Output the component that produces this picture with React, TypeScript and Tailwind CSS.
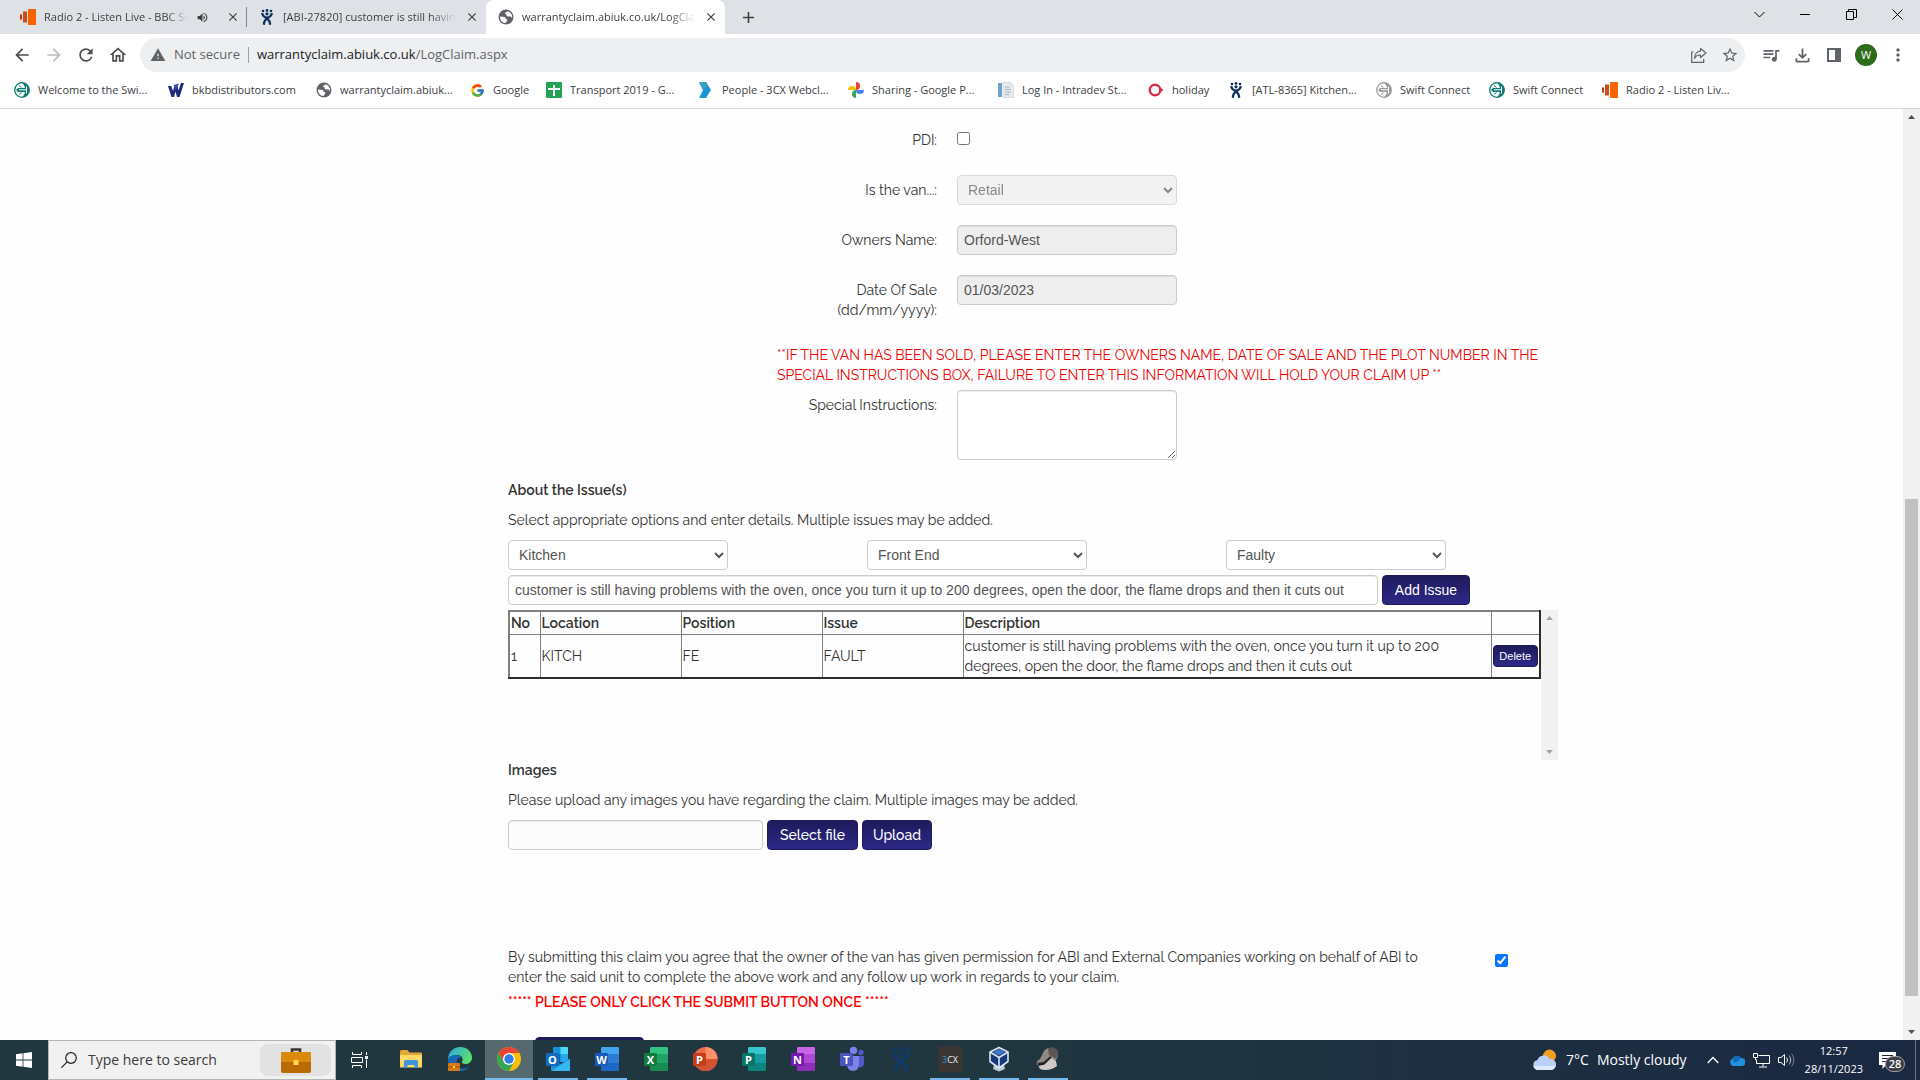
import { useState } from 'react'
import type { ReactNode } from 'react'
import { FcGoogle } from 'react-icons/fc'
import {
  MdAdd,
  MdArrowBack,
  MdArrowForward,
  MdClose,
  MdMoreVert,
  MdOutlineFileDownload,
  MdOutlineHome,
  MdQueueMusic,
  MdRefresh,
  MdStarBorder,
  MdVolumeUp,
  MdWarning,
} from 'react-icons/md'

type Issue = { no: number; location: string; position: string; issue: string; description: string }

const ISSUE_TEXT =
  'customer is still having problems with the oven, once you turn it up to 200 degrees, open the door, the flame drops and then it cuts out'

const issues: Issue[] = [
  { no: 1, location: 'KITCH', position: 'FE', issue: 'FAULT', description: ISSUE_TEXT },
]

/* ---------- small logos ---------- */

function SoundsIcon() {
  return (
    <svg width="16" height="16" viewBox="0 0 16 16">
      <path d="M0 5.5h2v5H0z" fill="#a83a1a" />
      <path d="M3 2.5h4v11H3z" fill="#cf4a14" />
      <path d="M8 0h8v16H8z" fill="#fa6400" />
    </svg>
  )
}

function JiraIcon({ color = '#0b2f5e', size = 16 }: { color?: string; size?: number }) {
  return (
    <svg width={size} height={size} viewBox="0 0 16 16" fill={color}>
      <circle cx="4" cy="2" r="1.3" />
      <circle cx="8" cy="1.4" r="1.4" />
      <circle cx="12" cy="2" r="1.3" />
      <circle cx="8" cy="4.8" r="1.6" />
      <path d="M2 4.2c.6 2.8 2.6 4.6 4.3 5.2C4.8 10.8 3.8 12.8 3.7 15.5L6 16c-.1-2.2.7-4 2-5 1.3 1 2.100 2.800 2 5l2.300-.5c-.1-2.700-1.100-4.700-2.600-6.100C11.400 8.800 13.400 7 14 4.200L11.600 4C11.300 6 10 7.400 8 7.600 6 7.400 4.700 6 4.400 4z" />
    </svg>
  )
}

function SwiftIcon({ color }: { color: string }) {
  return (
    <svg width="16" height="16" viewBox="0 0 16 16" fill="none">
      <circle cx="8" cy="8" r="7.3" stroke={color} strokeWidth="1.3" />
      <path d="M8 .7a7.300 7.300 0 0 1 0 14.600c1.800-1.600 2.600-3.300 2.900-5.300H4L2 8l2-2h6.900C10.600 4 9.800 2.300 8 .7z" fill={color} />
      <path d="M5 7.800h8M12.500 4.500v7" stroke="#fff" />
      <path d="M5 3.500 7.500 5.500M5 12.500l2.500-2" stroke={color} />
    </svg>
  )
}

function BkbIcon() {
  return (
    <svg width="16" height="16" viewBox="0 0 16 16" fill="#1c2a80">
      <path d="M0 4h3.200l1.800 5L6.500 4h3l1 4.500L13 1h3l-4.500 14H9L7.500 9.500 6 15H3.500z" />
      <path d="M5.500 3 11 1.500 8 8z" fill="#3b4fb5" />
    </svg>
  )
}

function SheetsIcon() {
  return (
    <svg width="16" height="16" viewBox="0 0 16 16">
      <rect width="16" height="16" rx="1" fill="#23a455" />
      <path d="M7 3h2v3h5v2H9v6H7V8H2V6h5z" fill="#fff" />
    </svg>
  )
}

function PeopleIcon() {
  return (
    <svg width="16" height="16" viewBox="0 0 16 16">
      <path d="M1 0h7l5 8-5 8H1l4-8z" fill="#1b96d6" />
      <path d="M1 0h7l2 3.2L5 8z" fill="#3a9fc4" />
    </svg>
  )
}

function PhotosIcon() {
  return (
    <svg width="16" height="16" viewBox="0 0 16 16">
      <path d="M8 0a4 4 0 0 1 0 8z" fill="#ea4335" />
      <path d="M16 8a4 4 0 0 1-8 0z" fill="#4285f4" />
      <path d="M8 16a4 4 0 0 1 0-8z" fill="#34a853" />
      <path d="M0 8a4 4 0 0 1 8 0z" fill="#fbbc04" />
    </svg>
  )
}

function IntradevIcon() {
  return (
    <svg width="16" height="16" viewBox="0 0 16 16">
      <path d="M0 1h4v14H0z" fill="#6fa3c8" />
      <path d="M5 .5h7l3.5 3V15.5H5z" fill="#e6eaee" stroke="#c3cbd3" strokeWidth=".6" />
      <path d="M7 5h5M7 7.5h6M7 10h6M7 12.5h4" stroke="#a9b4c0" />
    </svg>
  )
}

function HolidayIcon() {
  return (
    <svg width="16" height="16" viewBox="0 0 16 16">
      <circle cx="7" cy="8" r="5.3" fill="none" stroke="#d9304a" strokeWidth="2.400" />
      <path d="M12 5.5 15.5 8 12 10.5z" fill="#d9304a" />
    </svg>
  )
}

function GlobeIcon() {
  return (
    <svg width="16" height="16" viewBox="0 0 16 16">
      <circle cx="8" cy="8" r="7.500" fill="#5f6368" />
      <path d="M2 7.500 6.500 8c1 .3 1.200 1 1 1.800l1.300.4c.7.4.7 1.200.2 1.800L7.500 14C4 13.800 1.800 11 2 7.500z" fill="#fff" />
      <path d="M9.500 2.200c3 .8 5 3.300 4.600 6.800-.8-.3-1.300-1-1.500-1.800-1 .5-2.600.6-3.600-.2-.8-.8-.2-1.700-1.500-2-.6-.2-.6-.9 0-1.200z" fill="#fff" />
    </svg>
  )
}

/* ---------- browser ---------- */

function Tab({ icon, title, active, audio }: { icon: ReactNode; title: string; active?: boolean; audio?: boolean }) {
  return (
    <div className={`flex w-[239px] items-center gap-2 pr-1.5 pl-3 ${active ? 'rounded-t-lg bg-white' : ''}`}>
      <span className="shrink-0">{icon}</span>
      <span className="min-w-0 flex-1 overflow-hidden mask-r-from-85% whitespace-nowrap">{title}</span>
      {audio && <MdVolumeUp size={13} className="mr-2 shrink-0" />}
      <button aria-label={`Close ${title}`} className="shrink-0 p-px">
        <MdClose size={14} />
      </button>
    </div>
  )
}

function TabStrip() {
  return (
    <div className="flex h-[34px] bg-[#dee1e6] pl-2 text-[11px] text-[#3c4043]">
      <Tab icon={<SoundsIcon />} title="Radio 2 - Listen Live - BBC Sounds" audio />
      <span className="my-auto -ml-px h-5 w-px bg-[#80868b]" />
      <Tab icon={<JiraIcon />} title="[ABI-27820] customer is still having problems" />
      <Tab icon={<GlobeIcon />} title="warrantyclaim.abiuk.co.uk/LogClaim.aspx" active />
      <button aria-label="New tab" className="px-3.5">
        <MdAdd size={19} />
      </button>
      <div className="ml-auto flex pb-1.5 text-black">
        <button aria-label="Search tabs" className="flex w-[46px] items-center justify-center">
          <svg width="11" height="11" viewBox="0 0 11 11" fill="none" stroke="currentColor">
            <path d="m.5 3 5 5 5-5" />
          </svg>
        </button>
        <button aria-label="Minimise" className="flex w-[46px] items-center justify-center">
          <svg width="11" height="11" viewBox="0 0 11 11" fill="none" stroke="currentColor">
            <path d="M0 5.500h10" />
          </svg>
        </button>
        <button aria-label="Restore" className="flex w-[46px] items-center justify-center">
          <svg width="11" height="11" viewBox="0 0 11 11" fill="none" stroke="currentColor">
            <path d="M.5 2.500h7v8h-7zM2.500 2.500v-2h8v8h-3" />
          </svg>
        </button>
        <button aria-label="Close" className="flex w-[46px] items-center justify-center">
          <svg width="11" height="11" viewBox="0 0 11 11" fill="none" stroke="currentColor">
            <path d="m.5.5 10 10M10.500.5l-10 10" />
          </svg>
        </button>
      </div>
    </div>
  )
}

function Toolbar() {
  return (
    <div className="flex h-[42px] items-center bg-white px-3 text-[#5f6368]">
      <div className="flex items-center gap-3">
        <button aria-label="Back"><MdArrowBack size={20} className="text-[#4a4d51]" /></button>
        <button aria-label="Forward"><MdArrowForward size={20} className="text-[#babcbe]" /></button>
        <button aria-label="Reload"><MdRefresh size={20} className="text-[#4a4d51]" /></button>
        <button aria-label="Home"><MdOutlineHome size={20} className="text-[#4a4d51]" /></button>
      </div>
      <div className="ml-3 flex h-[34px] flex-1 items-center rounded-full bg-[#eeeff1] pr-1.5 pl-2.5 text-[13px]">
        <MdWarning size={16} />
        <span className="ml-2">Not secure</span>
        <span className="mx-2 h-4 w-px bg-[#9aa0a6]" />
        <span className="text-[#202124]">warrantyclaim.abiuk.co.uk</span>
        <span>/LogClaim.aspx</span>
        <div className="ml-auto flex items-center gap-3.5">
          <button aria-label="Share">
            <svg width="16" height="16" viewBox="0 0 16 16" fill="none" stroke="currentColor" strokeWidth="1.2">
              <path d="M2.500 5H.7v10.300h12V12" />
              <path d="M9.500 1.500 15 6l-5.500 4.500V8C6.500 8 4.500 9 3.500 11.500 3.700 7 6 4.500 9.500 4z" strokeLinejoin="round" />
            </svg>
          </button>
          <button aria-label="Bookmark this tab"><MdStarBorder size={18} /></button>
        </div>
      </div>
      <div className="ml-4 flex items-center gap-[11px]">
        <button aria-label="Media"><MdQueueMusic size={20} /></button>
        <button aria-label="Downloads"><MdOutlineFileDownload size={21} /></button>
        <button aria-label="Side panel">
          <svg width="20" height="20" viewBox="0 0 20 20">
            <path d="M3 3h14v14H3zM5 5v10h6V5z" fill="currentColor" fillRule="evenodd" />
          </svg>
        </button>
        <button className="size-[22px] rounded-full bg-[#2c6b1a] text-[11px] text-white">W</button>
        <button aria-label="Menu"><MdMoreVert size={20} /></button>
      </div>
    </div>
  )
}

const bookmarks = [
  { icon: <SwiftIcon color="#0d7a72" />, label: 'Welcome to the Swi...', width: 'w-[154px]' },
  { icon: <BkbIcon />, label: 'bkbdistributors.com', width: 'w-[148px]' },
  { icon: <GlobeIcon />, label: 'warrantyclaim.abiuk...', width: 'w-[154px]' },
  { icon: <FcGoogle size={15} />, label: 'Google', width: 'w-[76px]' },
  { icon: <SheetsIcon />, label: 'Transport 2019 - G...', width: 'w-[152px]' },
  { icon: <PeopleIcon />, label: 'People - 3CX Webcl...', width: 'w-[150px]' },
  { icon: <PhotosIcon />, label: 'Sharing - Google P...', width: 'w-[150px]' },
  { icon: <IntradevIcon />, label: 'Log In - Intradev St...', width: 'w-[150px]' },
  { icon: <HolidayIcon />, label: 'holiday', width: 'w-[80px]' },
  { icon: <JiraIcon />, label: '[ATL-8365] Kitchen...', width: 'w-[148px]' },
  { icon: <SwiftIcon color="#9b9b9b" />, label: 'Swift Connect', width: 'w-[113px]' },
  { icon: <SwiftIcon color="#0d7a72" />, label: 'Swift Connect', width: 'w-[113px]' },
  { icon: <SoundsIcon />, label: 'Radio 2 - Listen Liv...', width: 'w-[150px]' },
]

function BookmarksBar() {
  return (
    <nav className="flex h-[33px] items-center border-b border-[#d5d7da] bg-white pb-1 pl-3.5 text-[11px] text-[#3c4043]">
      {bookmarks.map((b, i) => (
        <a key={i} href="#" className={`flex shrink-0 items-center gap-2 whitespace-nowrap ${b.width}`}>
          {b.icon}
          {b.label}
        </a>
      ))}
    </nav>
  )
}

/* ---------- claim form ---------- */

const fieldClass = 'h-[30px] rounded border border-[#ccc] px-1.5 font-["Liberation_Sans",sans-serif] text-sm text-[#555]'
const buttonClass =
  'h-[30px] rounded border border-[#1d1a57] bg-linear-to-b from-[#1f1b5b] to-[#2d2888] text-sm text-white'

function Row({ id, label, children }: { id: string; label: string; children: ReactNode }) {
  return (
    <div className="mb-5 flex items-start gap-5 pl-[264px]">
      <label htmlFor={id} className="w-[165px] shrink-0 pt-[5px] text-right">
        {label}
      </label>
      {children}
    </div>
  )
}

function Arrow({ up, color }: { up?: boolean; color: string }) {
  return (
    <svg width="17" height="17" viewBox="0 0 17 17" fill={color}>
      <path d={up ? 'M8.500 6 12 10H5z' : 'M8.500 11 12 7H5z'} />
    </svg>
  )
}

function IssuesTable() {
  return (
    <div className="flex h-[150px]">
      <div className="min-w-0 flex-1">
        <table className="w-full table-fixed border-collapse border-2 border-t-[#808080] border-r-[#2c2c2c] border-b-[#2c2c2c] border-l-[#808080]">
          <colgroup>
            <col className="w-[31px]" />
            <col className="w-[141px]" />
            <col className="w-[141px]" />
            <col className="w-[141px]" />
            <col />
            <col className="w-[49px]" />
          </colgroup>
          <thead>
            <tr className="text-left">
              {['No', 'Location', 'Position', 'Issue', 'Description', ''].map(h => (
                <th key={h} className="border border-[#808080] p-px font-semibold">{h}</th>
              ))}
            </tr>
          </thead>
          <tbody>
            {issues.map(i => (
              <tr key={i.no}>
                <td className="border border-[#808080] p-px">{i.no}</td>
                <td className="border border-[#808080] p-px">{i.location}</td>
                <td className="border border-[#808080] p-px">{i.position}</td>
                <td className="border border-[#808080] p-px">{i.issue}</td>
                <td className="border border-[#808080] p-px">{i.description}</td>
                <td className="border border-[#808080] p-px">
                  <button className='block h-[22px] w-full rounded-sm border border-[#1d1a57] bg-linear-to-b from-[#1f1b5b] to-[#2d2888] font-["Liberation_Sans",sans-serif] text-[11px] leading-5 text-white'>
                    Delete
                  </button>
                </td>
              </tr>
            ))}
          </tbody>
        </table>
      </div>
      <div className="flex w-[17px] flex-col justify-between bg-[#f1f1f1]" aria-hidden="true">
        <Arrow up color="#a3a3a3" />
        <Arrow color="#a3a3a3" />
      </div>
    </div>
  )
}

function ClaimForm() {
  const [description, setDescription] = useState(ISSUE_TEXT)
  const [agreed, setAgreed] = useState(true)

  return (
    <form
      onSubmit={e => e.preventDefault()}
      className="mx-auto w-full max-w-[1050px] pt-4 font-[Raleway,Lato,sans-serif] text-sm leading-5 text-[#333] oldstyle-nums"
    >
      <Row id="pdi" label="PDI:">
        <input id="pdi" type="checkbox" className="mt-[7px] mb-2.5 size-[13px]" />
      </Row>
      <Row id="van" label="Is the van...:">
        <select id="van" disabled className={`${fieldClass} w-[220px] bg-[#eee] opacity-70`}>
          <option>Retail</option>
        </select>
      </Row>
      <Row id="owner" label="Owners Name:">
        <input id="owner" disabled defaultValue="Orford-West" className={`${fieldClass} w-[220px] bg-[#eee] shadow-[inset_0_1px_1px_#00000013]`} />
      </Row>
      <Row id="sale" label="Date Of Sale (dd/mm/yyyy):">
        <input id="sale" disabled defaultValue="01/03/2023" className={`${fieldClass} w-[220px] bg-[#eee] shadow-[inset_0_1px_1px_#00000013]`} />
      </Row>

      <p className="my-[5px] pt-[5px] pl-[269px] text-[#e00] uppercase">
        **If the van has been sold, please enter the owners name, date of sale and the plot number in the special
        instructions box, failure to enter this information will hold your claim up **
      </p>

      <Row id="special" label="Special Instructions:">
        <textarea id="special" className="h-[70px] w-[220px] rounded border border-[#ccc] bg-white shadow-[inset_0_1px_1px_#00000013]" />
      </Row>

      <h2 className="mb-2.5 font-semibold">About the Issue(s)</h2>
      <p className="mb-2.5">Select appropriate options and enter details. Multiple issues may be added.</p>
      <div className="mb-[5px] grid grid-cols-[359px_359px_1fr]">
        <select aria-label="Location" className={`${fieldClass} w-[220px] bg-white`}>
          <option>Kitchen</option>
        </select>
        <select aria-label="Position" className={`${fieldClass} w-[220px] bg-white`}>
          <option>Front End</option>
        </select>
        <select aria-label="Issue" className={`${fieldClass} w-[220px] bg-white`}>
          <option>Faulty</option>
        </select>
      </div>
      <div className="mb-[5px] flex gap-1">
        <input
          aria-label="Description"
          value={description}
          onChange={e => setDescription(e.target.value)}
          className={`${fieldClass} w-[870px] bg-white shadow-[inset_0_1px_1px_#00000013]`}
        />
        <button className={`${buttonClass} w-[88px] font-["Liberation_Sans",sans-serif]`}>Add Issue</button>
      </div>
      <IssuesTable />

      <h2 className="mb-2.5 font-semibold">Images</h2>
      <p className="mb-2.5">Please upload any images you have regarding the claim. Multiple images may be added.</p>
      <div className="flex gap-1">
        <input aria-label="Image file" readOnly className={`${fieldClass} w-[255px] bg-[#fcfcfc] shadow-[inset_0_1px_1px_#00000013]`} />
        <button className={`${buttonClass} w-[91px] font-medium`}>Select file</button>
        <button className={`${buttonClass} w-[70px] font-medium`}>Upload</button>
      </div>

      <div className="mt-[97px] flex">
        <label htmlFor="agree" className="w-[940px]">
          By submitting this claim you agree that the owner of the van has given permission for ABI and External
          Companies working on behalf of ABI to enter the said unit to complete the above work and any follow up work in
          regards to your claim.
        </label>
        <input
          id="agree"
          type="checkbox"
          checked={agreed}
          onChange={e => setAgreed(e.target.checked)}
          className="mt-[7px] ml-[47px] size-[13px] accent-[#0075ff]"
        />
      </div>
      <p className="mt-[5px] font-semibold text-[#f00]">***** PLEASE ONLY CLICK THE SUBMIT BUTTON ONCE *****</p>
      <button className={`${buttonClass} mt-[25px] ml-[27px] w-[109px]`}>Submit</button>
    </form>
  )
}

/* ---------- taskbar ---------- */

function OfficeIcon({ letter, dark, mid, light }: { letter: string; dark: string; mid: string; light: string }) {
  return (
    <svg width="26" height="26" viewBox="0 0 26 26">
      <rect x="7" y="1" width="18" height="24" rx="1.500" fill={mid} />
      <path d="M8.500 1h15A1.500 1.500 0 0 1 25 2.500V8H7V2.500A1.500 1.500 0 0 1 8.500 1z" fill={light} />
      <path d="M7 17h18v6.500a1.500 1.500 0 0 1-1.500 1.500h-15A1.500 1.500 0 0 1 7 23.500z" fill={dark} opacity=".6" />
      <rect x="1" y="7" width="13" height="13" rx="1" fill={dark} />
      <text x="7.500" y="17.500" textAnchor="middle" fontSize="11" fontWeight="700" fill="#fff">{letter}</text>
    </svg>
  )
}

function OutlookIcon() {
  return (
    <svg width="26" height="26" viewBox="0 0 26 26">
      <rect x="8" y="1" width="15" height="15" rx="1" fill="#1490df" />
      <path d="M15.500 1H22a1 1 0 0 1 1 1v6.500h-7.500z" fill="#50d9ff" />
      <path d="M8 8.500h7.500V16H8z" fill="#0364b8" />
      <path d="M15.500 8.500H23V16h-7.500z" fill="#28a8ea" />
      <path d="M6 12.500 15.500 18l9.500-5.500V24a1 1 0 0 1-1 1H7a1 1 0 0 1-1-1z" fill="#1a8fdc" />
      <path d="M6.500 25 25 13v11a1 1 0 0 1-1 1z" fill="#35b8f1" />
      <rect x="1" y="7" width="13" height="13" rx="1" fill="#0f6cbd" />
      <text x="7.500" y="17.500" textAnchor="middle" fontSize="11" fontWeight="700" fill="#fff">O</text>
    </svg>
  )
}

function PowerPointIcon() {
  return (
    <svg width="26" height="26" viewBox="0 0 26 26">
      <circle cx="13.500" cy="13" r="12" fill="#ed6c47" />
      <path d="M13.500 1a12 12 0 0 1 12 12h-12z" fill="#ff8f6b" />
      <path d="M1.500 13h24a12 12 0 0 1-24 0z" fill="#d35230" />
      <rect x="1" y="7" width="13" height="13" rx="1" fill="#c43e1c" />
      <text x="7.500" y="17.500" textAnchor="middle" fontSize="11" fontWeight="700" fill="#fff">P</text>
    </svg>
  )
}

function TeamsIcon() {
  return (
    <svg width="26" height="26" viewBox="0 0 26 26">
      <circle cx="22" cy="6.500" r="2.700" fill="#5059c9" />
      <circle cx="14.500" cy="4.500" r="3.700" fill="#7b83eb" />
      <path d="M18 10h7v7.500a4 4 0 0 1-5 3.800z" fill="#5059c9" />
      <path d="M8 10h12v9a6 6 0 0 1-12 0z" fill="#7b83eb" />
      <rect x="1" y="7" width="13" height="13" rx="1" fill="#4b53bc" />
      <text x="7.500" y="17.500" textAnchor="middle" fontSize="11" fontWeight="700" fill="#fff">T</text>
    </svg>
  )
}

function ChromeIcon() {
  return (
    <svg width="24" height="24" viewBox="0 0 24 24">
      <circle cx="12" cy="12" r="12" fill="#fbbc04" />
      <path d="M1.610 6A12 12 0 0 1 22.390 6H12L6.800 15z" fill="#ea4335" />
      <path d="M1.610 6A12 12 0 0 0 12 24l5.200-9H6.800z" fill="#34a853" />
      <circle cx="12" cy="12" r="6" fill="#fff" />
      <circle cx="12" cy="12" r="4.700" fill="#2f7de9" />
    </svg>
  )
}

function EdgeIcon() {
  return (
    <svg width="26" height="26" viewBox="0 0 26 26">
      <defs>
        <linearGradient id="edge-top" x1="0" y1="0" x2="1" y2=".5">
          <stop offset="0" stopColor="#2aa5e8" />
          <stop offset="1" stopColor="#5be06a" />
        </linearGradient>
      </defs>
      <path d="M1 14C1 6 6.500 1 13 1c7 0 12 4.800 12 10.500 0 4-3 6.500-6.500 6.500-3 0-4-1.300-3.500-2.500 1.500-2 .5-6.500-4.500-6.500C6 9 1.500 11 1 14z" fill="url(#edge-top)" />
      <path d="M1 14c.5-3 4-5 8-5 2.500 0 4.500 1 5.500 2.500C12 11 9.500 13 9.500 16.500c0 4.500 4 6.500 8 6 2.500-.3 4-1.200 5.500-2.500-2 3-5.500 5-10 5C6 25 1 20 1 14z" fill="#1569b5" />
      <rect x="1" y="17" width="12" height="8" rx="1" fill="#d97a12" />
      <path d="M1 20.500h12v1H1z" fill="#9c4f06" />
      <rect x="6" y="20" width="2" height="2" fill="#ffd54a" />
    </svg>
  )
}

function ExplorerIcon() {
  return (
    <svg width="24" height="24" viewBox="0 0 24 24">
      <path d="M1 4.500A1.500 1.500 0 0 1 2.500 3h6l2 2.500H22A1 1 0 0 1 23 6.500V20H1z" fill="#e5a63a" />
      <path d="M1 8h22v12.500H1z" fill="#ffd868" />
      <path d="M5 21v-6.500A1.500 1.500 0 0 1 6.500 13h11a1.500 1.500 0 0 1 1.500 1.500V21h-3.500v-3h-7v3z" fill="#3f95d8" />
    </svg>
  )
}

function ThreeCxIcon() {
  return (
    <svg width="26" height="26" viewBox="0 0 26 26">
      <rect x="1" width="24" height="26" fill="#3a3635" />
      <text x="5" y="16.500" fontSize="9" fill="#1f9ad6">3<tspan fill="#eee">CX</tspan></text>
    </svg>
  )
}

function VirtualBoxIcon() {
  return (
    <svg width="26" height="26" viewBox="0 0 26 26" strokeLinejoin="round">
      <path d="m8 19-1 4 6 2.500 6-2.500-1-4z" fill="#b9c7d6" />
      <path d="m13 1.500 9 4.500v9.500L13 22l-9-6.500V6z" fill="#16397a" stroke="#dce6f2" strokeWidth="1.600" />
      <path d="m4 6 9 5.500L22 6M13 11.500V22" fill="none" stroke="#dce6f2" strokeWidth="1.600" />
      <path d="m7 6 6-3 6 3-6 3.500z" fill="#3f78bf" />
    </svg>
  )
}

function ShellIcon() {
  return (
    <svg width="26" height="26" viewBox="0 0 26 26">
      <path d="M9 5c4-5 13-4 14 2 .6 4-1.500 6-3 8l-5-3-7 6-6 1c-1-3 1-5 3-6z" fill="#8f8a86" />
      <path d="M13 2.500c4-2 9-.5 10 3.500.7 3-1 5-2 6.500L14 9z" fill="#5b5654" />
      <path d="m3 19 6-1 7-6 5 3 1 5c-5 4-12 5-17 3z" fill="#cfcac6" />
      <path d="m2.500 17 6-1 7-6 1 1.500-7 7-6 1.500z" fill="#262221" />
    </svg>
  )
}

function BriefcaseIcon() {
  return (
    <svg width="30" height="25" viewBox="0 0 30 25">
      <path d="M11 4V1.500h8V4" fill="none" stroke="#3c3430" strokeWidth="2.500" />
      <rect y="4" width="30" height="21" rx="2" fill="#b96a05" />
      <path d="M2 4h26a2 2 0 0 1 2 2v8H0V6a2 2 0 0 1 2-2z" fill="#dc8a0c" />
      <rect x="12.500" y="12" width="5" height="5" fill="#ffd84a" />
    </svg>
  )
}

function TaskViewIcon() {
  return (
    <svg width="18" height="16" viewBox="0 0 18 16" fill="none" stroke="#fff">
      <path d="M1.500 0v2.500h9V0M1.500 16v-2.500h9V16M.5 5.500h11v5H.5zM15.500 0v3M15.500 7.500V16" />
      <path d="M14 4h3v3h-3z" fill="#fff" stroke="none" />
    </svg>
  )
}

const apps = [
  { name: 'File Explorer', icon: <ExplorerIcon /> },
  { name: 'Edge', icon: <EdgeIcon /> },
  { name: 'Chrome', icon: <ChromeIcon />, open: true, active: true },
  { name: 'Outlook', icon: <OutlookIcon />, open: true },
  { name: 'Word', icon: <OfficeIcon letter="W" dark="#185abd" mid="#2b7cd3" light="#41a5ee" />, open: true },
  { name: 'Excel', icon: <OfficeIcon letter="X" dark="#107c41" mid="#21a366" light="#33c481" /> },
  { name: 'PowerPoint', icon: <PowerPointIcon /> },
  { name: 'Publisher', icon: <OfficeIcon letter="P" dark="#077568" mid="#1a9ba1" light="#37c6d0" /> },
  { name: 'OneNote', icon: <OfficeIcon letter="N" dark="#7719aa" mid="#ae4bd5" light="#ca64ea" /> },
  { name: 'Teams', icon: <TeamsIcon /> },
  { name: 'Jira', icon: <JiraIcon color="#123a66" size={26} /> },
  { name: '3CX', icon: <ThreeCxIcon />, open: true },
  { name: 'VirtualBox', icon: <VirtualBoxIcon />, open: true },
  { name: 'Shell', icon: <ShellIcon />, open: true },
]

function Taskbar() {
  return (
    <footer className="flex h-10 shrink-0 bg-linear-to-r from-[#21373f] from-50% to-[#1a2842] text-white">
      <button aria-label="Start" className="flex w-12 items-center justify-center">
        <svg width="16" height="16" viewBox="0 0 16 16" fill="#fff">
          <path d="M0 2.200 6.600 1.300v6.300H0zM7.400 1.200 16 0v7.600H7.400zM0 8.400h6.600v6.300L0 13.800zM7.400 8.400H16V16l-8.600-1.200z" />
        </svg>
      </button>
      <div className="flex w-72 items-center border border-[#b5b5b5] bg-[#f1f1f1] pl-3 text-[#3a3a3a]">
        <svg width="16" height="16" viewBox="0 0 16 16" fill="none" stroke="#222" strokeWidth="1.200">
          <circle cx="10" cy="6" r="5.300" />
          <path d="m6.200 9.800-6 6" />
        </svg>
        <input aria-label="Search" placeholder="Type here to search" className="ml-[11px] w-0 flex-1 text-sm placeholder:text-[#3a3a3a]" />
        <span className="mr-1 flex h-8 w-[71px] items-center justify-center rounded-lg bg-[#e2e2e2]">
          <BriefcaseIcon />
        </span>
      </div>
      <button aria-label="Task view" className="mr-[3px] flex w-12 items-center justify-center">
        <TaskViewIcon />
      </button>
      <div className="flex gap-px">
        {apps.map(a => (
          <button
            key={a.name}
            aria-label={a.name}
            className={`flex w-12 flex-col items-center ${a.active ? 'bg-[#56696f]' : ''}`}
          >
            <span className="flex flex-1 items-center">{a.icon}</span>
            <span className={`h-0.5 ${a.active ? 'w-full' : 'w-10'} ${a.open ? 'bg-[#76b9ed]' : ''}`} />
          </button>
        ))}
      </div>

      <div className="ml-auto flex items-center">
        <svg width="26" height="22" viewBox="0 0 26 22">
          <circle cx="17.500" cy="7" r="6.500" fill="#f39c1f" />
          <path d="M6 21a5 5 0 0 1-.6-9.900A6.500 6.500 0 0 1 17.500 10a5.500 5.500 0 0 1 2 11z" fill="#b9d0f7" />
          <path d="M6 21a5 5 0 0 1-4.500-4h22a5.500 5.500 0 0 1-4 4z" fill="#dfe9fb" />
        </svg>
        <span className="ml-2 text-sm">7°C</span>
        <span className="ml-2 text-sm">Mostly cloudy</span>
        <svg className="ml-5" width="12" height="8" viewBox="0 0 12 8" fill="none" stroke="#fff" strokeWidth="1.300">
          <path d="m.7 7 5.300-5.500L11.300 7" />
        </svg>
        <svg className="ml-2.5" width="16" height="11" viewBox="0 0 16 11">
          <path d="M4 11a4 4 0 0 1-.5-7.500A5 5 0 0 1 12 3a4 4 0 0 1 1 8z" fill="#1f8fe0" />
          <path d="M3.500 3.500A5 5 0 0 1 12 3L6 8z" fill="#0f6ab8" />
        </svg>
        <svg className="ml-2" width="17" height="15" viewBox="0 0 17 15" fill="none" stroke="#fff">
          <path d="M5.500 2.500h11v8H3.500v-4M10 10.500v3M6 14h8" />
          <path d="M.5.500h4v4h-4zM2.500 4.500V7" />
        </svg>
        <svg className="ml-2" width="17" height="14" viewBox="0 0 17 14" fill="none" stroke="#fff">
          <path d="M.5 4.500H3L6.500 1.500v11L3 9.500H.5z" />
          <path d="M8.500 4.500c1.200 1.500 1.200 3.500 0 5" />
          <path d="M11 2.500c2.200 2.700 2.200 6.300 0 9" opacity=".7" />
          <path d="M13.500.7c3 3.700 3 8.900 0 12.600" opacity=".4" />
        </svg>
        <div className="ml-2.5 text-center text-[11px] leading-[18px]">
          <p>12:57</p>
          <p>28/11/2023</p>
        </div>
        <button aria-label="Notifications" className="relative mr-2 ml-4 h-6 w-7">
          <svg width="17" height="17" viewBox="0 0 17 17">
            <path d="M0 0h17v13H7l-3.500 4v-4H0z" fill="#fff" />
            <path d="M3 3.500h11M3 6.500h11M3 9.500h7" stroke="#1b2a42" />
          </svg>
          <span className="absolute top-2 left-1.5 flex h-4 w-5 items-center justify-center rounded-full border border-[#9a9a9a] bg-[#3b3f45] text-[11px] font-semibold">
            28
          </span>
        </button>
        <span className="mr-1 h-10 w-px bg-[#6b7688]" />
      </div>
    </footer>
  )
}

export default function App() {
  return (
    <div className='flex h-screen flex-col overflow-hidden bg-white font-["Segoe_UI","Open_Sans",sans-serif]'>
      <header>
        <TabStrip />
        <Toolbar />
        <BookmarksBar />
      </header>
      <div className="flex min-h-0 flex-1">
        <main className="min-w-0 flex-1 overflow-hidden bg-[#fefefe] pl-[163px]">
          <ClaimForm />
        </main>
        <div className="flex w-[17px] flex-col bg-[#f1f1f1]" aria-hidden="true">
          <Arrow up color="#505050" />
          <div className="flex flex-1 flex-col px-0.5">
            <span className="flex-[373]" />
            <span className="flex-[497] bg-[#c1c1c1]" />
            <span className="flex-[27]" />
          </div>
          <Arrow color="#505050" />
        </div>
      </div>
      <Taskbar />
    </div>
  )
}
